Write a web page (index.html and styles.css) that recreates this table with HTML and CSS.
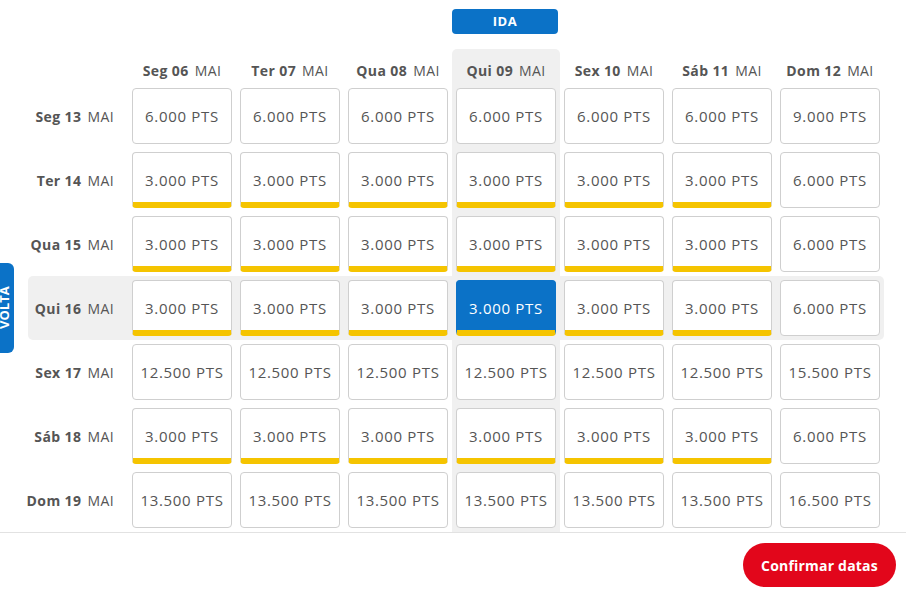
FILE: index.html
```html
<!DOCTYPE html>
<html lang="pt">
  <head>
    <meta charset="UTF-8" />
    <meta name="viewport" content="width=device-width, initial-scale=1.0" />
    <title>Calendário de pontos</title>
    <link rel="stylesheet" href="styles.css">
  </head>
  <body>
    <div class="volta">VOLTA</div>

    <div class="calendar">
      <div class="ida-row">
        <span class="ida">IDA</span>
      </div>

      <div class="row head">
        <div class="label"></div>
        <div class="col"><b>Seg 06</b> MAI</div>
        <div class="col"><b>Ter 07</b> MAI</div>
        <div class="col"><b>Qua 08</b> MAI</div>
        <div class="col on"><b>Qui 09</b> MAI</div>
        <div class="col"><b>Sex 10</b> MAI</div>
        <div class="col"><b>Sáb 11</b> MAI</div>
        <div class="col"><b>Dom 12</b> MAI</div>
      </div>

      <div class="row">
        <div class="label"><b>Seg 13</b> MAI</div>
        <div class="col"><div class="cell">6.000 PTS</div></div>
        <div class="col"><div class="cell">6.000 PTS</div></div>
        <div class="col"><div class="cell">6.000 PTS</div></div>
        <div class="col on"><div class="cell">6.000 PTS</div></div>
        <div class="col"><div class="cell">6.000 PTS</div></div>
        <div class="col"><div class="cell">6.000 PTS</div></div>
        <div class="col"><div class="cell">9.000 PTS</div></div>
      </div>

      <div class="row">
        <div class="label"><b>Ter 14</b> MAI</div>
        <div class="col"><div class="cell low">3.000 PTS</div></div>
        <div class="col"><div class="cell low">3.000 PTS</div></div>
        <div class="col"><div class="cell low">3.000 PTS</div></div>
        <div class="col on"><div class="cell low">3.000 PTS</div></div>
        <div class="col"><div class="cell low">3.000 PTS</div></div>
        <div class="col"><div class="cell low">3.000 PTS</div></div>
        <div class="col"><div class="cell">6.000 PTS</div></div>
      </div>

      <div class="row">
        <div class="label"><b>Qua 15</b> MAI</div>
        <div class="col"><div class="cell low">3.000 PTS</div></div>
        <div class="col"><div class="cell low">3.000 PTS</div></div>
        <div class="col"><div class="cell low">3.000 PTS</div></div>
        <div class="col on"><div class="cell low">3.000 PTS</div></div>
        <div class="col"><div class="cell low">3.000 PTS</div></div>
        <div class="col"><div class="cell low">3.000 PTS</div></div>
        <div class="col"><div class="cell">6.000 PTS</div></div>
      </div>

      <div class="row on">
        <div class="label"><b>Qui 16</b> MAI</div>
        <div class="col"><div class="cell low">3.000 PTS</div></div>
        <div class="col"><div class="cell low">3.000 PTS</div></div>
        <div class="col"><div class="cell low">3.000 PTS</div></div>
        <div class="col on"><div class="cell low picked">3.000 PTS</div></div>
        <div class="col"><div class="cell low">3.000 PTS</div></div>
        <div class="col"><div class="cell low">3.000 PTS</div></div>
        <div class="col"><div class="cell">6.000 PTS</div></div>
      </div>

      <div class="row">
        <div class="label"><b>Sex 17</b> MAI</div>
        <div class="col"><div class="cell">12.500 PTS</div></div>
        <div class="col"><div class="cell">12.500 PTS</div></div>
        <div class="col"><div class="cell">12.500 PTS</div></div>
        <div class="col on"><div class="cell">12.500 PTS</div></div>
        <div class="col"><div class="cell">12.500 PTS</div></div>
        <div class="col"><div class="cell">12.500 PTS</div></div>
        <div class="col"><div class="cell">15.500 PTS</div></div>
      </div>

      <div class="row">
        <div class="label"><b>Sáb 18</b> MAI</div>
        <div class="col"><div class="cell low">3.000 PTS</div></div>
        <div class="col"><div class="cell low">3.000 PTS</div></div>
        <div class="col"><div class="cell low">3.000 PTS</div></div>
        <div class="col on"><div class="cell low">3.000 PTS</div></div>
        <div class="col"><div class="cell low">3.000 PTS</div></div>
        <div class="col"><div class="cell low">3.000 PTS</div></div>
        <div class="col"><div class="cell">6.000 PTS</div></div>
      </div>

      <div class="row">
        <div class="label"><b>Dom 19</b> MAI</div>
        <div class="col"><div class="cell">13.500 PTS</div></div>
        <div class="col"><div class="cell">13.500 PTS</div></div>
        <div class="col"><div class="cell">13.500 PTS</div></div>
        <div class="col on"><div class="cell">13.500 PTS</div></div>
        <div class="col"><div class="cell">13.500 PTS</div></div>
        <div class="col"><div class="cell">13.500 PTS</div></div>
        <div class="col"><div class="cell">16.500 PTS</div></div>
      </div>
    </div>

    <div class="footer">
      <button class="confirm">Confirmar datas</button>
    </div>
  </body>
</html>
```

FILE: styles.css
```css
body {
  margin: 0;
  font-family: "Open Sans", "Liberation Sans", sans-serif;
  color: #555;
  background: #fff;
  position: relative;
}
b {
  font-weight: 700;
}
.calendar {
  padding: 9px 0 0 28px;
}
.ida-row {
  display: flex;
  padding-left: 424px;
  height: 40px;
}
.ida {
  width: 106px;
  height: 25px;
  line-height: 25px;
  border-radius: 4px;
  background: #0b72c7;
  color: #fff;
  font-weight: 700;
  font-size: 13px;
  letter-spacing: 0.5px;
  text-align: center;
}
.row {
  display: flex;
  width: 856px;
  height: 64px;
  border-radius: 5px;
}
.row.head {
  height: 35px;
}
.row.on {
  background: #f0f0f0;
}
.label {
  width: 100px;
  box-sizing: border-box;
  padding-right: 14px;
  display: flex;
  align-items: center;
  justify-content: flex-end;
  font-size: 14px;
  letter-spacing: 0.4px;
  white-space: nowrap;
}
.label b {
  margin-right: 6px;
}
.col {
  width: 108px;
  box-sizing: border-box;
  padding: 4px;
}
.head .col {
  display: flex;
  align-items: flex-end;
  justify-content: center;
  padding-bottom: 4px;
  font-size: 14px;
  letter-spacing: 0.4px;
  white-space: nowrap;
}
.head .col b {
  margin-right: 6px;
}
.col.on {
  background: #f0f0f0;
}
.head .col.on {
  border-radius: 5px 5px 0 0;
}
.cell {
  height: 56px;
  box-sizing: border-box;
  border: 1px solid #cfcfcf;
  border-radius: 4px;
  background: #fff;
  display: flex;
  align-items: center;
  justify-content: center;
  font-size: 15px;
  letter-spacing: 0.7px;
  white-space: nowrap;
}
.cell.low {
  border-bottom: 6px solid #f5c400;
  padding-top: 5px;
}
.cell.picked {
  background: #0b72c7;
  border-color: #0b72c7;
  border-bottom-color: #f5c400;
  color: #fff;
}
.footer {
  border-top: 1px solid #e2e2e2;
  display: flex;
  justify-content: flex-end;
  padding: 10px 10px 0 0;
}
.confirm {
  width: 153px;
  height: 44px;
  border: none;
  border-radius: 22px;
  background: #e2061b;
  color: #fff;
  font-family: inherit;
  font-weight: 700;
  font-size: 14px;
  letter-spacing: 0.2px;
}
.volta {
  position: absolute;
  top: 263px;
  left: -6px;
  width: 20px;
  height: 90px;
  border-radius: 6px;
  background: #0b72c7;
  color: #fff;
  font-weight: 700;
  font-size: 13px;
  display: flex;
  align-items: center;
  justify-content: center;
  writing-mode: vertical-rl;
  transform: rotate(180deg);
}
```
